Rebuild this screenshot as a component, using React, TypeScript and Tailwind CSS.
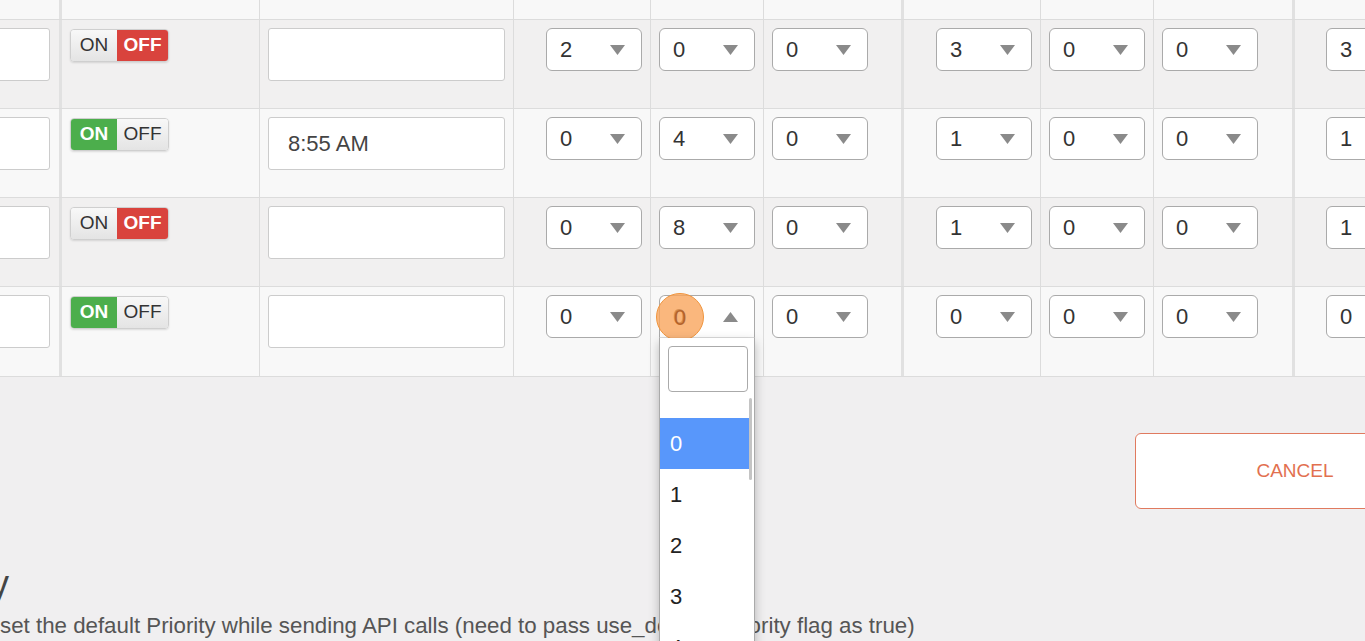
import React from "react";

type Toggle = "on" | "off";

interface Row {
  toggle: Toggle;
  time: string;
  values: string[];
  open?: boolean;
}

const rows: Row[] = [
  { toggle: "off", time: "", values: ["2", "0", "0", "3", "0", "0", "3"] },
  { toggle: "on", time: "8:55 AM", values: ["0", "4", "0", "1", "0", "0", "1"] },
  { toggle: "off", time: "", values: ["0", "8", "0", "1", "0", "0", "1"] },
  { toggle: "on", time: "", values: ["0", "0", "0", "0", "0", "0", "0"], open: true },
];

const Arrow = ({ up }: { up?: boolean }) => (
  <svg width="15" height="10" viewBox="0 0 15 10" className="shrink-0">
    {up ? (
      <polygon points="0,10 15,10 7.5,0" fill="#8a8a8a" />
    ) : (
      <polygon points="0,0 15,0 7.5,10" fill="#8a8a8a" />
    )}
  </svg>
);

const Select = ({ value, open }: { value: string; open?: boolean }) => (
  <div className="relative w-[96px]">
    <div
      className={
        "flex h-[43px] items-center justify-between border border-[#aaaaaa] bg-white pl-[13px] pr-[16px] text-[22px] text-[#333] " +
        (open ? "rounded-t-[6px] border-b-[#dcdcdc]" : "rounded-[6px]")
      }
    >
      <span>{value}</span>
      <Arrow up={open} />
    </div>
    {open ? (
      <>
        <span className="absolute left-[-3px] top-[-2px] flex h-[48px] w-[48px] items-center justify-center rounded-full border border-[#f0953e] bg-[#f9a55c]/80 text-[22px] text-[#b5632a]">
          0
        </span>
        <div className="absolute left-0 top-[43px] z-10 h-[320px] w-[96px] border-x border-[#aaaaaa] bg-white shadow-[0_4px_10px_rgba(0,0,0,0.25)]">
          <div className="mx-[8px] mt-[8px] h-[46px] w-[80px] rounded-[4px] border border-[#aaaaaa] bg-white" />
          <div className="relative mt-[26px]">
            <div className="flex h-[51px] w-[90px] items-center bg-[#5897fb] pl-[10px] text-[22px] text-white">
              0
            </div>
            {["1", "2", "3", "4"].map((n) => (
              <div
                key={n}
                className="flex h-[51px] w-[90px] items-center pl-[10px] text-[22px] text-[#222]"
              >
                {n}
              </div>
            ))}
            <span className="absolute right-[2px] top-[-20px] h-[82px] w-[3px] rounded-full bg-[#c4c4c4]" />
          </div>
        </div>
      </>
    ) : null}
  </div>
);

const Switch = ({ state }: { state: Toggle }) => (
  <div className="flex h-[33px] w-[99px] overflow-hidden rounded-[4px] border border-[#cfcfcf] text-[19px] shadow-[0_1px_2px_rgba(0,0,0,0.12)]">
    <span
      className={
        "flex w-[46px] items-center justify-center " +
        (state === "on"
          ? "bg-[#4cae4c] font-bold text-white"
          : "bg-gradient-to-b from-[#f8f8f8] to-[#e4e4e4] text-[#333]")
      }
    >
      ON
    </span>
    <span
      className={
        "flex flex-1 items-center justify-center " +
        (state === "off"
          ? "bg-[#d9433d] font-bold text-white"
          : "bg-gradient-to-b from-[#f8f8f8] to-[#e4e4e4] text-[#333]")
      }
    >
      OFF
    </span>
  </div>
);

const Input = ({ className, value }: { className: string; value?: string }) => (
  <div
    className={
      "flex h-[53px] items-center rounded-[3px] border border-[#cccccc] bg-white pl-[19px] text-[22px] text-[#444] " +
      className
    }
  >
    {value}
  </div>
);

const thin = "border-l border-[#dcdcdc]";
const thick = "border-l-[3px] border-[#e1e1e1]";

const cells = [
  { w: "w-[137px] shrink-0", pl: "pl-[32px]", b: thin },
  { w: "w-[113px] shrink-0", pl: "pl-[8px]", b: thin },
  { w: "w-[138px] shrink-0", pl: "pl-[8px]", b: thin },
  { w: "w-[139px] shrink-0", pl: "pl-[32px]", b: thick },
  { w: "w-[113px] shrink-0", pl: "pl-[8px]", b: thin },
  { w: "w-[139px] shrink-0", pl: "pl-[8px]", b: thin },
  { w: "w-[200px] shrink-0", pl: "pl-[31px]", b: thick },
];

export default function App() {
  return (
    <div className="h-[641px] w-[1365px] overflow-hidden bg-[#f0eff0] font-['Liberation_Sans',Arial,sans-serif]">
      <div className="border-b border-[#dcdcdc]">
        {/* header strip */}
        <div className="flex h-[20px] border-b border-[#dcdcdc] bg-[#f8f8f8]">
          <div className="w-[59px] shrink-0" />
          <div className={"w-[200px] shrink-0 " + thick} />
          <div className={"w-[254px] shrink-0 " + thin} />
          {cells.map((c, i) => (
            <div key={i} className={c.w + " " + c.b} />
          ))}
        </div>
        {rows.map((row, r) => (
          <div
            key={r}
            className={
              "flex h-[89px] " +
              (r < rows.length - 1 ? "border-b border-[#dcdcdc] " : "") +
              (r % 2 === 0 ? "bg-[#f1f0f0]" : "bg-[#f8f8f8]")
            }
          >
            <div className="w-[59px] shrink-0 overflow-hidden pt-[8px]">
              <Input className="ml-[-40px] w-[90px]" />
            </div>
            <div className={"w-[200px] shrink-0 pl-[8px] pt-[9px] " + thick}>
              <Switch state={row.toggle} />
            </div>
            <div className={"w-[254px] shrink-0 pl-[8px] pt-[8px] " + thin}>
              <Input className="w-[237px]" value={row.time} />
            </div>
            {cells.map((c, i) => (
              <div key={i} className={c.w + " " + c.pl + " " + c.b + " pt-[8px]"}>
                <Select value={row.values[i]} open={row.open && i === 1} />
              </div>
            ))}
          </div>
        ))}
      </div>

      <div className="flex justify-end pt-[56px]">
        <button className="mr-[-90px] flex h-[76px] w-[320px] shrink-0 items-center justify-center rounded-[6px] border border-[#e07a5f] bg-white text-[19px] text-[#e2704f]">
          CANCEL
        </button>
      </div>

      <div className="mt-[55px] text-[#444]">
        <h2 className="ml-[-9px] text-[36px] leading-[40px]">y</h2>
        <p className="mt-[9px] whitespace-nowrap text-[22.3px] leading-[26px] text-[#555]">
          set the default Priority while sending API calls (need to pass use_default_priority flag as true)
        </p>
      </div>
    </div>
  );
}
